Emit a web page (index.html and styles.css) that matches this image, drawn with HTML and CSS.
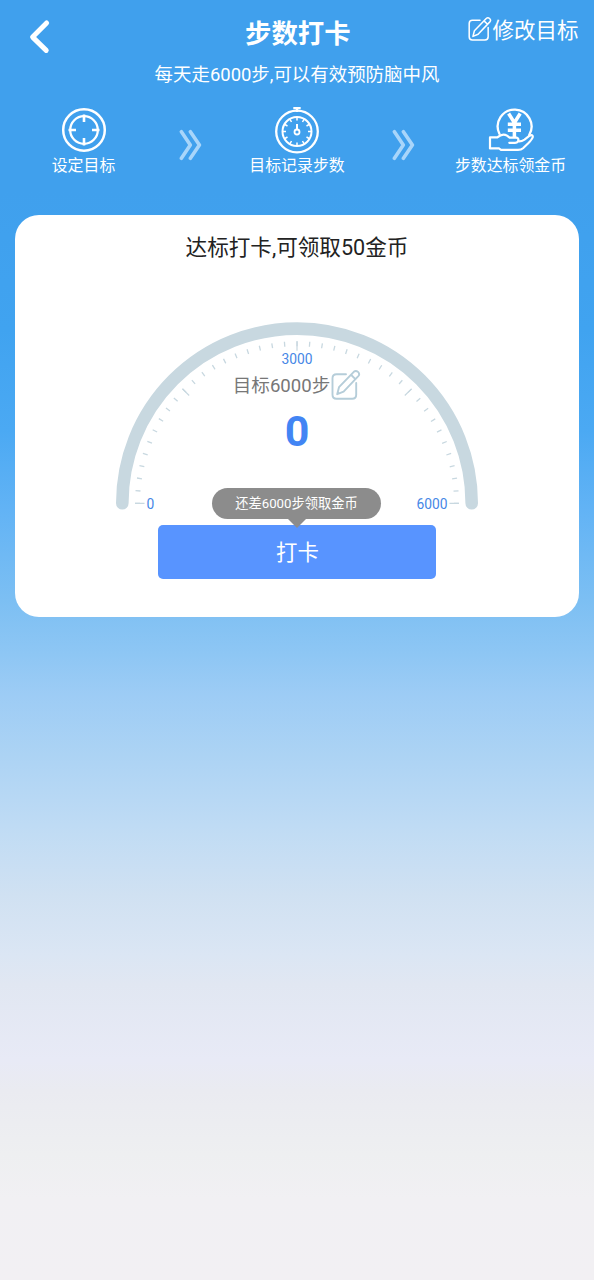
FILE: index.html
```html
<!DOCTYPE html>
<html lang="zh-CN">
<head>
<meta charset="utf-8">
<title>步数打卡</title>
<link rel="stylesheet" href="styles.css">
</head>
<body>
<svg class="defs" width="0" height="0">
  <symbol id="edit" viewBox="0 0 30 32">
    <g fill="none" stroke="currentColor" stroke-width="1.9" stroke-linejoin="round" stroke-linecap="round">
      <path d="M15 5.2H5.5Q1.5 5.2 1.5 9.2V25.8Q1.5 29.8 5.5 29.8H21.2Q25.2 29.8 25.2 25.8V14"/>
      <path d="M6.2 25.2L8 18.2L22.8 2.8Q24.8 1 27 2.9Q29.2 5 27.3 7.1L12.6 22.6ZM20 5.8L24.4 10.1"/>
    </g>
  </symbol>
  <symbol id="next" viewBox="0 0 24 32">
    <path d="M2.4 2.7L11.3 16L2.4 29.3M11.4 2.7L20.4 16L11.4 29.3" fill="none" stroke="currentColor" stroke-width="3.6" stroke-linecap="round" stroke-linejoin="round"/>
  </symbol>
</svg>
<header class="header">
  <svg class="back" viewBox="0 0 24 36"><path d="M18.6 4L4.6 18.1L18.2 31.4" fill="none" stroke="#fff" stroke-width="5" stroke-linecap="round" stroke-linejoin="round"/></svg>
  <h1 class="title">步数打卡</h1>
  <div class="modify"><svg class="modify-icon"><use href="#edit"/></svg><span>修改目标</span></div>
</header>
<p class="subtitle">每天走6000步,可以有效预防脑中风</p>
<section class="steps">
  <div class="step">
    <svg class="step-icon" viewBox="0 0 48 48" fill="none" stroke="#fff">
      <circle cx="24" cy="24" r="20.8" stroke-width="2.5"/>
      <circle cx="24" cy="24" r="13.8" stroke-width="2.3"/>
      <path d="M24 8.5V16M24 32V39.5M8.5 24H16M32 24H39.5" stroke-width="2.6"/>
    </svg>
    <span>设定目标</span>
  </div>
  <svg class="next"><use href="#next"/></svg>
  <div class="step">
    <svg class="step-icon" viewBox="0 0 48 48" fill="none" stroke="#fff">
      <circle cx="24" cy="25.5" r="20.8" stroke-width="2.3"/>
      <circle cx="24" cy="25.5" r="14.5" stroke-width="2"/>
      <path d="M20.3 2.2H27.7M24 2.2V6" stroke-width="2.3"/>
      <circle cx="24" cy="26" r="2.5" stroke-width="1.8"/>
      <path d="M24 23.5V17.9" stroke-width="2"/>
      <path d="M24 11.5V14.5M24 36.5V39.5M10 25.5H13M35 25.5H38M17 13.4L18.5 16M31 13.4L29.5 16M11.9 18.5L14.5 20M36.1 18.5L33.5 20M11.9 32.5L14.5 31M36.1 32.5L33.5 31M17 37.6L18.5 35M31 37.6L29.5 35" stroke-width="1.5"/>
    </svg>
    <span>目标记录步数</span>
  </div>
  <svg class="next"><use href="#next"/></svg>
  <div class="step">
    <svg class="step-icon" viewBox="0 0 48 48" fill="none" stroke="#fff" stroke-linejoin="round" stroke-linecap="round">
      <path d="M12.4 27.8A16.9 16.9 0 1 1 42.2 29" stroke-width="2.3"/>
      <path d="M21.6 7.5L27.4 16.8L33.2 7.5M27.4 16.8V31M20.8 18.3H34M20.8 24.2H34" stroke-width="3.5" stroke-linecap="butt"/>
      <path d="M3 31.4H10.3Q15.5 26.8 20 29.6L22.6 31.6H29.5Q32.3 32.6 31 35.2Q34 35.8 37.5 33.6L42.6 29.7Q46 28.2 45.8 31Q45 33.5 41 37.5L36 42.2Q34.2 43.8 31 43.8H14L12 42.4H3ZM31 35.3Q30 36.8 28 36.8H22.3" stroke-width="2.2"/>
    </svg>
    <span>步数达标领金币</span>
  </div>
</section>
<main class="card">
  <h2 class="card-title">达标打卡,可领取50金币</h2>
  <div class="gauge">
    <svg class="dial" viewBox="0 0 364 190" fill="none" stroke="#c8d8e0">
      <path d="M7.3 182.3A174.7 174.7 0 0 1 356.7 182.3" stroke-width="12.6" stroke-linecap="round"/>
      <path class="ticks" d="M22.5 182.3A159.5 159.5 0 0 1 341.5 182.3"/>
      <path d="M20 182.3H29.5M344 182.3H334.5M182 20.3V29.8M67.5 67.8L74.2 74.5M296.5 67.8L289.8 74.5" stroke-width="1.2"/>
      <g class="scale">
        <text x="31.5" y="187.5">0</text>
        <text x="182" y="43.4" text-anchor="middle">3000</text>
        <text x="332.5" y="187.5" text-anchor="end">6000</text>
      </g>
    </svg>
    <div class="reading">
      <div class="goal"><span>目标6000步</span><svg class="goal-icon"><use href="#edit"/></svg></div>
      <div class="count">0</div>
    </div>
    <div class="tip">还差6000步领取金币</div>
  </div>
  <button class="punch">打卡</button>
</main>
</body>
</html>
```

FILE: styles.css
```css
* { box-sizing: border-box; margin: 0; padding: 0; }

body {
  height: 1280px;
  overflow: hidden;
  color: #fff;
  font-family: Roboto, "Noto Sans CJK SC", sans-serif;
  background: linear-gradient(#40a0ed 0, #40a0ed 190px, #40a3f0 330px, #4ba9f3 430px, #62b3f5 510px, #7cbff3 600px, #8dc6f4 652px, #9dccf5 695px, #acd3f4 755px, #c1dcf4 834px, #d0e1f2 895px, #dbe6f4 955px, #e1e7f2 985px, #e8eaf6 1060px, #eaebf1 1090px, #eeeff1 1155px, #f1f0f3 1198px, #f2f0f3 1280px);
}

.defs { display: block; height: 0; }

.header {
  display: grid;
  grid-template-columns: 212px 106px 1fr;
  height: 62px;
  padding: 0 15.5px 0 27.5px;
}

.back { width: 24px; height: 36px; margin-top: 19px; }

.title {
  margin-left: 5.5px;
  padding-top: 14px;
  font-size: 26.4px;
  font-weight: 700;
  line-height: 40px;
  white-space: nowrap;
}

.modify {
  display: flex;
  justify-content: flex-end;
  padding-top: 15px;
  font-size: 21.5px;
  line-height: 32px;
}

.modify-icon { width: 24px; height: 26px; margin-top: 1px; }

.subtitle { font-size: 18.45px; line-height: 26px; text-align: center; }

.steps {
  display: grid;
  grid-template-columns: 126px 24px 1fr 24px 126px;
  gap: 0 32px;
  height: 78px;
  margin-top: 18px;
  padding: 0 20.5px;
}

.step {
  display: flex;
  flex-direction: column;
  align-items: center;
  font-size: 15.9px;
  line-height: 24px;
  white-space: nowrap;
}

.step-icon { width: 48px; height: 48px; }

.next { width: 24px; height: 32px; margin-top: 23px; color: #a8d5fa; }

.card {
  height: 402px;
  margin: 31px 15px 0;
  padding-top: 16px;
  border-radius: 24px;
  background: #fff;
}

.card-title {
  color: #222;
  font-size: 21.6px;
  font-weight: 400;
  line-height: 34px;
  text-align: center;
}

.gauge {
  position: relative;
  width: 364px;
  height: 204px;
  margin: 56px auto 0;
}

.dial { display: block; width: 364px; height: 190px; }

.ticks { stroke-width: 5; stroke-dasharray: 1.3 11.227; stroke-dashoffset: .65; }

.scale { fill: #4687e6; stroke: none; font-size: 13.8px; }

.reading {
  position: absolute;
  top: 49px;
  left: 0;
  width: 100%;
  text-align: center;
}

.goal {
  display: flex;
  justify-content: center;
  gap: 1px;
  color: #777;
  font-size: 18.6px;
  line-height: 32px;
}

.goal-icon { width: 30px; height: 32px; margin-top: -1px; color: #b5cdd9; }

.count { color: #4285f4; font-size: 43px; font-weight: 700; line-height: 58px; }

.tip {
  position: absolute;
  top: 167px;
  left: 97px;
  width: 169px;
  height: 31px;
  border-radius: 16px;
  background: #8c8c8c;
  font-size: 13.25px;
  line-height: 32px;
  text-align: center;
}

.tip::after {
  content: "";
  position: absolute;
  top: 31px;
  left: 76px;
  width: 18px;
  height: 9px;
  background: #8c8c8c;
  clip-path: polygon(0 0, 100% 0, 50% 100%);
}

.punch {
  display: block;
  width: 278px;
  height: 54px;
  margin: 0 auto;
  padding: 1px 0 0 1px;
  border: 0;
  border-radius: 5px;
  color: #fff;
  background: #5894ff;
  font: 21.4px/54px Roboto, "Noto Sans CJK SC", sans-serif;
}
```
